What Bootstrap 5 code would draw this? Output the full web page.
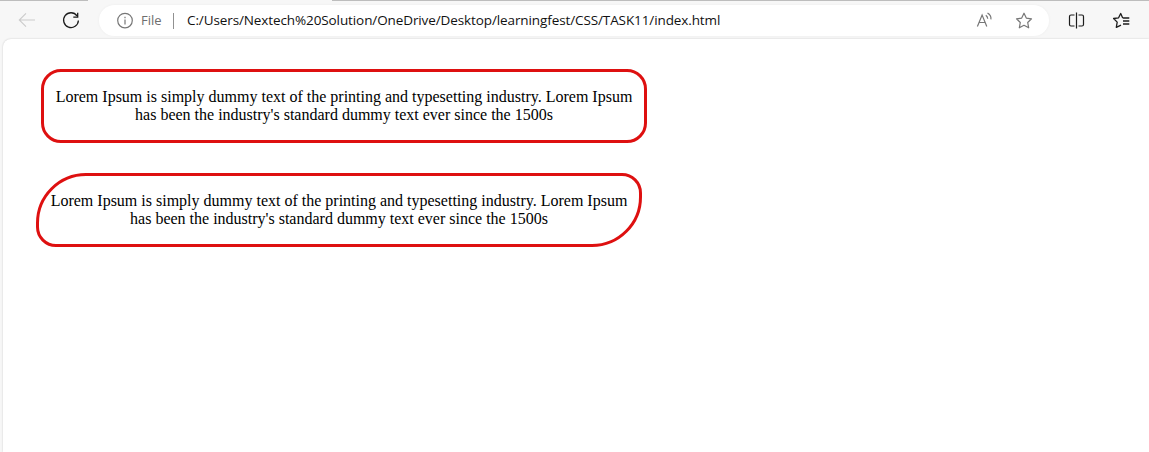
<!DOCTYPE html>
<html lang="en">
<head>
<meta charset="utf-8">
<title>index.html</title>
<link href="https://cdn.jsdelivr.net/npm/bootstrap@5.3.0/dist/css/bootstrap.min.css" rel="stylesheet">
<style>
body{height:452px;overflow:hidden;background:#f7f7f7;font-family:"Open Sans",sans-serif}
.tab-edge{height:1px;background:linear-gradient(90deg,#bdbdbd 0 88px,#f7f7f7 88px 332px,#bdbdbd 332px)}
.toolbar{height:38px;padding:4px 18px 3px}
.toolbar svg{flex:none;display:block}
.gap-reload{margin-left:26px}
.gap-star{margin-left:21px}
.gap-split{margin-left:18px}
.gap-favs{margin-left:27px}
.address{width:950px;height:31px;margin-left:18px;padding:0 16px 0 17px;background:#fff;box-shadow:0 0 3px #0000000c;font-size:13.5px;line-height:31px;white-space:nowrap}
.scheme{width:21px;margin-left:7px;color:#6e6e6e;font-size:13px}
.divider{width:1px;height:16px;background:#919191;margin:0 13px 0 11px}
.url{color:#111;letter-spacing:-.105px}
.page{margin-left:3px;height:413px;padding:30px 0 0 38px;background:#fff;border-top-left-radius:8px;box-shadow:0 0 2px #0003;font-family:"Liberation Serif",serif;font-size:16px;line-height:18px;color:#000}
.lorem{width:606px;height:74px;padding:16px 10px;border:3px solid #de1010;text-align:center}
.round-even{border-radius:20px}
.round-leaf{border-radius:50px 20px;margin:30px 0 0 -5px}
</style>
</head>
<body>
<div class="tab-edge"></div>
<header class="toolbar d-flex align-items-center">
  <svg width="18" height="18" viewBox="0 0 18 18" fill="none" stroke="#cbcbcb" stroke-width="1.1"><path d="M17 8H1.5M8 1.3 1.3 8 8 14.7"/></svg>
  <svg class="gap-reload" width="19" height="18" viewBox="0 0 19 18" fill="none" stroke="#1c1c1c" stroke-width="1.3"><path d="M15 3.8A7.4 7.4 0 1 0 16.4 8.5M15.7.8v4.4h-4.4"/></svg>
  <div class="address rounded-pill d-flex align-items-center">
    <svg width="18" height="18" viewBox="0 0 18 18" fill="none" stroke="#777" stroke-width="1.2"><circle cx="9" cy="8.6" r="7.3"/><path d="M9 7.6V12.500M9 4.800v1.400"/></svg>
    <span class="scheme">File</span>
    <span class="divider"></span>
    <span class="url">C:/Users/Nextech%20Solution/OneDrive/Desktop/learningfest/CSS/TASK11/index.html</span>
    <svg class="ms-auto" width="18" height="18" viewBox="0 0 18 18" fill="none" stroke="#777" stroke-width="1.2"><path d="M1.400 14.500 6.100 3 10.800 14.500M3 10.500h6.200M9.800 3.200c1.200.9 1.900 2 1.900 3.600M11.500 1.100c2.400 1.400 3.800 3.300 3.400 6.200"/></svg>
    <svg class="gap-star" width="18" height="18" viewBox="0 0 18 18" fill="none" stroke="#777" stroke-width="1.2" stroke-linejoin="round"><path d="m9 1.200 2.300 4.900 5.200.7-3.800 3.700 1 5.300L9 13.300l-4.700 2.500 1-5.300-3.800-3.700 5.200-.7z"/></svg>
  </div>
  <svg class="gap-split" width="18" height="18" viewBox="0 0 18 18" fill="none" stroke="#1c1c1c" stroke-width="1.2"><path d="M9.500.500V16.500M7.500 3H4Q2.500 3 2.500 4.500v8Q2.500 14 4 14h3.500M11.500 3H15q1.500 0 1.500 1.500v8Q16.500 14 15 14h-3.500"/></svg>
  <svg class="gap-favs" width="18" height="18" viewBox="0 0 18 18" fill="none" stroke="#1c1c1c" stroke-width="1.3" stroke-linejoin="round"><path d="M12.500 6 10.600 5.700 8.700 1.500 6.600 5.800l-5 .7 3.600 3.600-.9 5.300 4.700-2.300M11 6h6.300M11 9h6.300M11 12h6.300"/></svg>
</header>
<main class="page">
  <div class="lorem round-even">Lorem Ipsum is simply dummy text of the printing and typesetting industry. Lorem Ipsum has been the industry's standard dummy text ever since the 1500s</div>
  <div class="lorem round-leaf">Lorem Ipsum is simply dummy text of the printing and typesetting industry. Lorem Ipsum has been the industry's standard dummy text ever since the 1500s</div>
</main>
<script src="https://cdn.jsdelivr.net/npm/bootstrap@5.3.0/dist/js/bootstrap.bundle.min.js"></script>
</body>
</html>
